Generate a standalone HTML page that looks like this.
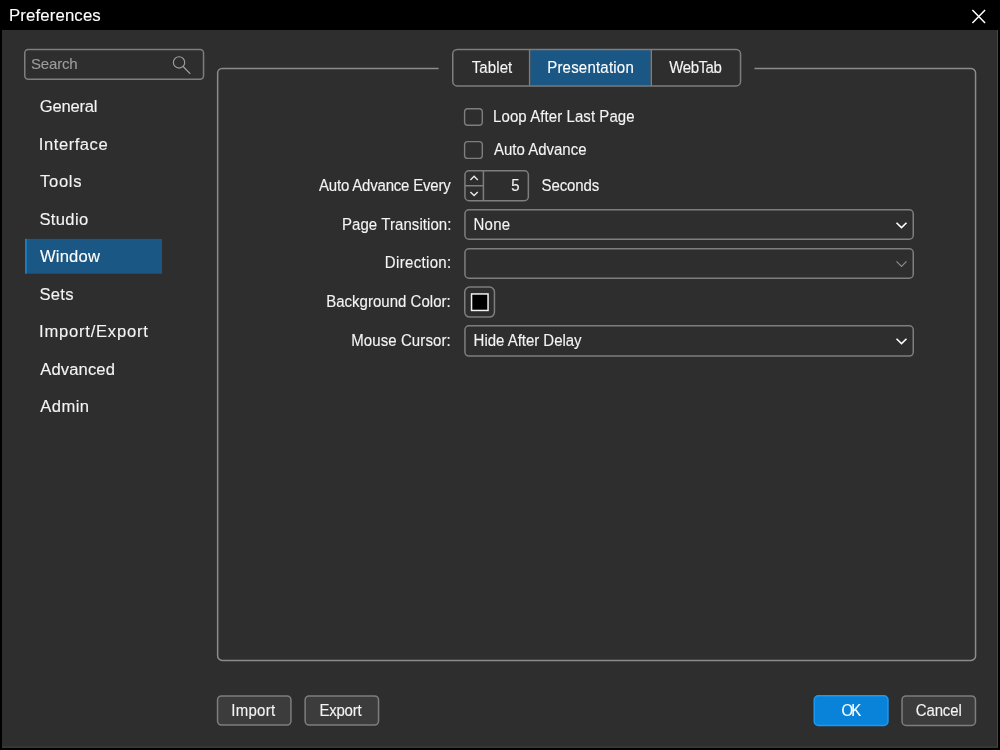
<!DOCTYPE html>
<html><head><meta charset="utf-8"><title>Preferences</title>
<style>
html,body{margin:0;padding:0;}
body{width:1000px;height:750px;overflow:hidden;background:#000;font-family:"Liberation Sans",sans-serif;position:relative;}
.t{position:absolute;white-space:nowrap;line-height:1;-webkit-text-stroke:0.12px currentColor;transform-origin:0 84.65%;}
.a{position:absolute;box-sizing:border-box;}
#txt{position:absolute;left:0;top:0;width:1000px;height:750px;will-change:transform;}
.win{left:2px;top:30px;width:995.5px;height:717px;background:#2e2e2e;}
.box{border:1.4px solid #7b7b7b;border-radius:4.5px;}
.btn{background:#3b3b3b;border:1.4px solid #707070;border-radius:4.5px;}
</style></head>
<body>
<svg class="a" style="left:0;top:0" width="1000" height="750" viewBox="0 0 1000 750">
<rect x="2" y="30" width="996" height="717.8" fill="#474747"/>
<rect x="2" y="30" width="995" height="716.7" fill="#2e2e2e"/>
<path d="M972.4 10.0 L985.1 23.1 M985.1 10.0 L972.4 23.1" stroke="#fff" stroke-width="1.5" fill="none"/>
<rect x="24.75" y="49.45" width="178.80" height="29.80" rx="3.5" ry="3.5" fill="none" stroke="#7e7e7e" stroke-width="1.5" />
<circle cx="179.05" cy="62.4" r="5.65" stroke="#a0a0a0" stroke-width="1.15" fill="none"/>
<path d="M183.1 66.5 L190.3 73.8" stroke="#a0a0a0" stroke-width="1.2" fill="none"/>
<rect x="25.2" y="238.9" width="136.8" height="34.8" fill="#1a5784"/>
<rect x="25.2" y="238.9" width="1.5" height="34.8" fill="#1b86d6"/>
<path d="M754.5 68.5 H971.05 A4.5 4.5 0 0 1 975.55 73.0 V655.9 A4.5 4.5 0 0 1 971.05 660.4 H222.15 A4.5 4.5 0 0 1 217.65 655.9 V73.0 A4.5 4.5 0 0 1 222.15 68.5 H438.6" stroke="#8c8c8c" stroke-width="1.5" fill="none"/>
<rect x="530.3" y="50" width="120.3" height="35.3" fill="#1a5784"/>
<rect x="452.75" y="49.4" width="287.80" height="36.50" rx="4.5" ry="4.5" fill="none" stroke="#7e7e7e" stroke-width="1.5" />
<path d="M529.6 49.4 V85.9 M651.3 49.4 V85.9" stroke="#7e7e7e" stroke-width="1.4"/>
<rect x="464.6" y="108.7" width="17.70" height="16.60" rx="3.2" ry="3.2" fill="none" stroke="#7e7e7e" stroke-width="1.4" />
<rect x="464.6" y="141.6" width="17.70" height="16.80" rx="3.2" ry="3.2" fill="none" stroke="#7e7e7e" stroke-width="1.4" />
<rect x="464.95" y="170.75" width="63.40" height="30.00" rx="4" ry="4" fill="none" stroke="#7e7e7e" stroke-width="1.5" />
<path d="M483.4 170.75 V200.75 M464.95 185.7 H483.4" stroke="#7e7e7e" stroke-width="1.5"/>
<path d="M470.4 179.9 L474.1 176.2 L477.8 179.9 M470.4 191.9 L474.1 195.6 L477.8 191.9" stroke="#e8e8e8" stroke-width="1.4" fill="none"/>
<rect x="464.95" y="209.75" width="448.30" height="29.40" rx="4" ry="4" fill="none" stroke="#7e7e7e" stroke-width="1.5" />
<rect x="464.95" y="248.75" width="448.30" height="29.50" rx="4" ry="4" fill="none" stroke="#7e7e7e" stroke-width="1.5" />
<rect x="464.95" y="325.75" width="448.30" height="30.30" rx="4" ry="4" fill="none" stroke="#7e7e7e" stroke-width="1.5" />
<path d="M896.5 222.7 L901.5 227.6 L906.5 222.7" stroke="#fff" stroke-width="1.55" fill="none"/>
<path d="M896.5 261.3 L901.5 266.4 L906.5 261.3" stroke="#8c8c8c" stroke-width="1.2" fill="none"/>
<path d="M896.5 338.7 L901.5 343.6 L906.5 338.7" stroke="#fff" stroke-width="1.55" fill="none"/>
<rect x="464.75" y="286.95" width="29.70" height="30.15" rx="5" ry="5" fill="none" stroke="#7e7e7e" stroke-width="1.5" />
<rect x="471.55" y="293.95" width="16.5" height="16.5" fill="#000" stroke="#f2f2f2" stroke-width="1.5"/>
<rect x="217.55" y="695.95" width="73.40" height="29.10" rx="4" ry="4" fill="#3c3c3c" stroke="#7e7e7e" stroke-width="1.5" />
<rect x="305.15" y="695.95" width="73.40" height="29.10" rx="4" ry="4" fill="#3c3c3c" stroke="#7e7e7e" stroke-width="1.5" />
<rect x="814.25" y="695.85" width="73.70" height="29.60" rx="4" ry="4" fill="#0883d9" stroke="#1c9af3" stroke-width="1.5" />
<rect x="902.05" y="695.95" width="73.40" height="29.50" rx="4" ry="4" fill="#3c3c3c" stroke="#7e7e7e" stroke-width="1.5" />
</svg>
<div id="txt">
<div class="t" style="left:8.88px;top:7.68px;font-size:16.8px;letter-spacing:0.140px;color:#ffffff;transform:scaleY(1.02)">Preferences</div>
<div class="t" style="left:31.08px;top:55.84px;font-size:15.0px;letter-spacing:-0.210px;color:#9c9c9c;transform:scaleY(1.0)">Search</div>
<div class="t" style="left:39.74px;top:99.19px;font-size:16.6px;letter-spacing:-0.208px;color:#f4f4f4;transform:scaleY(1.04)">General</div>
<div class="t" style="left:38.84px;top:136.85px;font-size:16.6px;letter-spacing:0.535px;color:#f4f4f4;transform:scaleY(1.04)">Interface</div>
<div class="t" style="left:40.00px;top:174.19px;font-size:16.6px;letter-spacing:0.688px;color:#f4f4f4;transform:scaleY(1.04)">Tools</div>
<div class="t" style="left:39.38px;top:211.85px;font-size:16.6px;letter-spacing:0.347px;color:#f4f4f4;transform:scaleY(1.04)">Studio</div>
<div class="t" style="left:39.94px;top:249.19px;font-size:16.6px;letter-spacing:0.194px;color:#ffffff;transform:scaleY(1.04)">Window</div>
<div class="t" style="left:39.38px;top:286.85px;font-size:16.6px;letter-spacing:0.347px;color:#f4f4f4;transform:scaleY(1.04)">Sets</div>
<div class="t" style="left:39.04px;top:324.19px;font-size:16.6px;letter-spacing:0.766px;color:#f4f4f4;transform:scaleY(1.04)">Import/Export</div>
<div class="t" style="left:40.28px;top:361.85px;font-size:16.6px;letter-spacing:0.115px;color:#f4f4f4;transform:scaleY(1.04)">Advanced</div>
<div class="t" style="left:40.28px;top:399.19px;font-size:16.6px;letter-spacing:0.438px;color:#f4f4f4;transform:scaleY(1.04)">Admin</div>
<div class="t" style="left:471.78px;top:60.30px;font-size:15.0px;letter-spacing:0.094px;color:#f4f4f4;transform:scaleY(1.05)">Tablet</div>
<div class="t" style="left:547.18px;top:60.30px;font-size:15.0px;letter-spacing:0.213px;color:#ffffff;transform:scaleY(1.05)">Presentation</div>
<div class="t" style="left:669.28px;top:60.30px;font-size:15.0px;letter-spacing:-0.433px;color:#f4f4f4;transform:scaleY(1.05)">WebTab</div>
<div class="t" style="left:493.06px;top:109.40px;font-size:15.0px;letter-spacing:0.078px;color:#f4f4f4;transform:scaleY(1.05)">Loop After Last Page</div>
<div class="t" style="left:494.06px;top:141.96px;font-size:15.0px;letter-spacing:-0.013px;color:#f4f4f4;transform:scaleY(1.05)">Auto Advance</div>
<div class="t" style="left:319.00px;top:177.84px;font-size:15.0px;letter-spacing:-0.194px;color:#f4f4f4;transform:scaleY(1.05)">Auto Advance Every</div>
<div class="t" style="left:511.36px;top:177.96px;font-size:15.0px;letter-spacing:0.000px;color:#f4f4f4;transform:scaleY(1.05)">5</div>
<div class="t" style="left:541.52px;top:177.96px;font-size:15.0px;letter-spacing:-0.096px;color:#f4f4f4;transform:scaleY(1.05)">Seconds</div>
<div class="t" style="left:341.90px;top:216.94px;font-size:15.0px;letter-spacing:0.078px;color:#f4f4f4;transform:scaleY(1.05)">Page Transition:</div>
<div class="t" style="left:473.60px;top:216.94px;font-size:15.0px;letter-spacing:0.187px;color:#f4f4f4;transform:scaleY(1.05)">None</div>
<div class="t" style="left:384.82px;top:254.94px;font-size:15.0px;letter-spacing:0.336px;color:#f4f4f4;transform:scaleY(1.05)">Direction:</div>
<div class="t" style="left:326.20px;top:293.86px;font-size:15.0px;letter-spacing:0.017px;color:#f4f4f4;transform:scaleY(1.05)">Background Color:</div>
<div class="t" style="left:351.20px;top:332.86px;font-size:15.0px;letter-spacing:0.094px;color:#f4f4f4;transform:scaleY(1.05)">Mouse Cursor:</div>
<div class="t" style="left:473.60px;top:332.86px;font-size:15.0px;letter-spacing:-0.026px;color:#f4f4f4;transform:scaleY(1.05)">Hide After Delay</div>
<div class="t" style="left:231.32px;top:703.30px;font-size:15.0px;letter-spacing:0.257px;color:#f4f4f4;transform:scaleY(1.05)">Import</div>
<div class="t" style="left:319.60px;top:703.30px;font-size:15.0px;letter-spacing:-0.272px;color:#f4f4f4;transform:scaleY(1.05)">Export</div>
<div class="t" style="left:841.60px;top:703.30px;font-size:15.0px;letter-spacing:-1.887px;color:#ffffff;transform:scaleY(1.05)">OK</div>
<div class="t" style="left:915.74px;top:703.30px;font-size:15.0px;letter-spacing:-0.129px;color:#f4f4f4;transform:scaleY(1.05)">Cancel</div>
</div>
</body></html>
